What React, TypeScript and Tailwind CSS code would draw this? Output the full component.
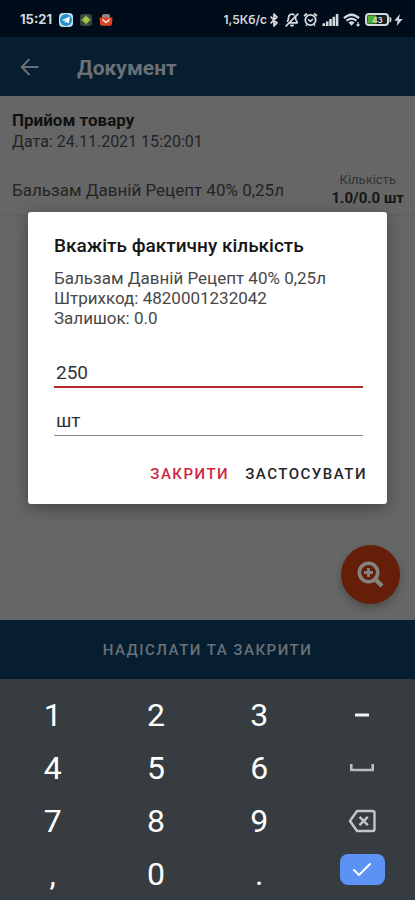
import { useState } from "react";
import { Bluetooth, BellOff, Check } from "lucide-react";

type Key = { label: string; face: React.ReactNode };

function StatusBar() {
  return (
    <div className="flex h-[37px] shrink-0 items-center justify-between bg-[#010c1a] pr-3 pl-5 pt-0.5 font-['Inter',sans-serif] text-[#d5d9dd]">
      <div className="flex items-center gap-[7px]">
        <span className="text-[13px] font-bold">15:21</span>
        <svg width="14" height="14" viewBox="0 0 14 14" aria-hidden="true">
          <rect width="14" height="14" rx="4" fill="#c4dfee" />
          <circle cx="7" cy="7" r="6" fill="#2592cb" />
          <path d="M3 7 11 3.6 9.6 10.6 7 8.8 5.8 10 5.6 8 9 5.4 4.8 7.7Z" fill="#fff" />
        </svg>
        <svg width="12" height="12" viewBox="0 0 13 13" aria-hidden="true">
          <rect width="13" height="13" rx="3" fill="#3d4340" />
          <path d="M6.500 1 8.500 3.500 12 6.500 8.500 9 6.500 12 4.500 9 1 6.500 4.500 3.500Z" fill="#7ba636" />
          <circle cx="6.500" cy="6.300" r="3.200" fill="#9dc94b" />
        </svg>
        <svg width="14" height="14" viewBox="0 0 14 14" aria-hidden="true">
          <path d="M3 5V2.500Q3 1 5 1h4q2 0 2 1.500V5" fill="#8c8782" />
          <path d="M.5 4.500h13l-.6 6.500q-.1 1.800-1.800 1.800H2.900Q1.200 12.800 1.100 11Z" fill="#e04427" />
          <path d="m3.500 6.500 3.500 3 3.500-3" fill="none" stroke="#fff" strokeWidth="1.300" />
        </svg>
      </div>
      <div className="flex items-center">
        <span className="text-[12px] font-semibold">1,5Кб/с</span>
        <Bluetooth className="mr-1" size={14} strokeWidth={3} />
        <BellOff className="mr-1 -scale-x-100" size={14} strokeWidth={3} />
        <svg className="mr-1" width="15" height="15" viewBox="0 0 15 15" fill="none" stroke="currentColor" aria-hidden="true">
          <circle cx="7.500" cy="8" r="5.200" strokeWidth="1.800" />
          <path d="M1 4 4 1.500M14 4 11 1.500" strokeWidth="1.800" />
          <path d="M5 7.200 7.400 9.400 10 7" strokeWidth="1.500" />
          <path d="m4 12.500-1.200 1.300M11 12.500l1.200 1.300" strokeWidth="1.300" />
        </svg>
        <svg className="mr-1" width="17" height="12" viewBox="0 0 17 13" preserveAspectRatio="none" fill="currentColor" aria-hidden="true">
          <path d="M.5 10h2.600v3H.5zM3.900 8h2.600v5H3.900zM7.200 5.500h2.600V13H7.200zM10.500 3h2.600v10h-2.600zM13.800 0h2.600v13h-2.600z" />
        </svg>
        <svg className="mr-1" width="18" height="14" viewBox="0 0 18 14" fill="none" stroke="currentColor" aria-hidden="true">
          <path d="M1 5.200Q8.500-1.800 16 5.200" strokeWidth="2.400" />
          <path d="M3.500 7.800Q8.500 3.300 13.500 7.800" strokeWidth="2.200" />
          <path d="M5.500 9.500Q8.500 7 11.500 9.500L8.500 12.800Z" fill="currentColor" stroke="none" />
          <path d="M15 9v4M13.500 11.500 15 13l1.500-1.500" strokeWidth="1.200" />
        </svg>
        <span className="relative mr-0.5 flex h-[13px] w-[27px] items-center justify-center">
          <svg className="absolute inset-0" width="27" height="13" viewBox="0 0 27 13" aria-hidden="true">
            <rect x="1" y="1" width="22" height="11" rx="3" fill="#14201f" stroke="#d5d9dd" strokeWidth="2" />
            <path d="M24.500 3.500q2 .5 2 3t-2 3z" fill="#d5d9dd" />
            <rect x="2.500" y="2.500" width="9" height="8" rx="1" fill="#4fb32d" />
          </svg>
          <span className="relative pr-0.5 text-[8px] leading-none font-bold">43</span>
        </span>
        <svg width="9" height="12" viewBox="0 0 9 13" fill="currentColor" aria-hidden="true">
          <path d="M6 0 0 7.300h3.500L2.500 13 9 5.400H5Z" />
        </svg>
      </div>
    </div>
  );
}

function QuantityDialog() {
  const [quantity, setQuantity] = useState("250");
  const [unit, setUnit] = useState("шт");
  return (
    <div role="dialog" aria-labelledby="dialog-title" className="w-full rounded-[3px] bg-white pt-5 pr-6 pb-3 pl-[26px] shadow-[0_4px_16px_rgba(0,0,0,0.35)]">
      <h2 id="dialog-title" className="text-[19px] leading-7 font-medium text-[#161616]">
        Вкажіть фактичну кількість
      </h2>
      <p className="mt-2 text-[17px] leading-5 text-[#484848]">
        Бальзам Давній Рецепт 40% 0,25л
        <br />
        Штрихкод: 4820001232042
        <br />
        Залишок: 0.0
      </p>
      <div className="mt-7 flex flex-col gap-4">
        <input
          aria-label="Кількість"
          inputMode="decimal"
          value={quantity}
          onChange={(e) => setQuantity(e.target.value)}
          className="h-8 w-full border-b-2 border-[#b3282b] bg-transparent px-0.5 pt-0.5 text-[19px] text-[#333] outline-none"
        />
        <input
          aria-label="Одиниця"
          value={unit}
          onChange={(e) => setUnit(e.target.value)}
          className="h-8 w-full border-b border-[#888] bg-transparent px-0.5 pt-0.5 text-[19px] text-[#333] outline-none"
        />
      </div>
      <div className="-mr-1 mt-5 flex justify-end gap-4 text-[15px] font-medium tracking-widest">
        <button type="button" className="h-9 text-[#cf1f3f]">ЗАКРИТИ</button>
        <button type="button" className="h-9 text-[#262626]">ЗАСТОСУВАТИ</button>
      </div>
    </div>
  );
}

const digit = (d: string): Key => ({ label: d, face: d });

const keys: Key[] = [
  digit("1"),
  digit("2"),
  digit("3"),
  {
    label: "Мінус",
    face: (
      <svg width="16" height="4" viewBox="0 0 16 4" aria-hidden="true">
        <path d="M1 2h14" stroke="#f2f3f3" strokeWidth="3" />
      </svg>
    ),
  },
  digit("4"),
  digit("5"),
  digit("6"),
  {
    label: "Пробіл",
    face: (
      <svg width="24" height="8" viewBox="0 0 24 8" fill="none" aria-hidden="true">
        <path d="M1.300 0v6h21.400V0" stroke="#b9bcbd" strokeWidth="2.600" />
      </svg>
    ),
  },
  digit("7"),
  digit("8"),
  digit("9"),
  {
    label: "Стерти",
    face: (
      <svg width="28" height="24" viewBox="0 0 28 24" fill="none" stroke="#c3c6c7" aria-hidden="true">
        <path d="M9 2h15.500q2 0 2 2v16q0 2-2 2H9L2 12Z" strokeWidth="2.400" strokeLinejoin="round" />
        <path d="m11.500 7.800 8.400 8.400m0-8.400-8.400 8.400" strokeWidth="2.400" />
      </svg>
    ),
  },
  digit(","),
  digit("0"),
  digit("."),
  {
    label: "Готово",
    face: (
      <span className="mb-2 flex h-[31px] w-[45px] items-center justify-center rounded-lg bg-[#5b92f3] text-white">
        <Check size={24} strokeWidth={2} />
      </span>
    ),
  },
];

function Keyboard() {
  return (
    <div className="grid shrink-0 grid-cols-4 bg-[#363c3f] pt-[9px] pr-0.5 text-[32px] leading-none text-white">
      {keys.map((key) => (
        <button key={key.label} type="button" aria-label={key.label} className="flex h-[53px] items-center justify-center pl-0.5">
          {key.face}
        </button>
      ))}
    </div>
  );
}

export default function App() {
  return (
    <div className="flex min-h-screen flex-col bg-[#666] font-['Roboto',sans-serif]">
      <StatusBar />
      <div className="relative flex flex-1 flex-col">
        <header className="flex h-[59px] shrink-0 items-center bg-[#061e30] pl-5 text-[#6a7075]">
          <button type="button" aria-label="Назад" className="mr-[38px]">
            <svg width="19" height="18" viewBox="0 0 19 18" fill="none" stroke="currentColor" strokeWidth="2" aria-hidden="true">
              <path d="M9.500 1 1.800 9l7.700 8M2 9h16.500" />
            </svg>
          </button>
          <h1 className="pt-1 text-[21px] font-bold">Документ</h1>
        </header>
        <main className="relative flex-1 text-[#242424]">
          <section className="border-b border-[#626262] px-3 pt-3.5 pb-2">
            <h2 className="text-[17px] leading-5 font-bold text-[#111]">Прийом товару</h2>
            <p className="text-base leading-6">Дата: 24.11.2021 15:20:01</p>
          </section>
          <section className="flex items-center justify-between border-b border-[#606060] py-2 pr-[11px] pl-3">
            <p className="pt-0.5 text-[17px] leading-6">Бальзам Давній Рецепт 40% 0,25л</p>
            <div className="text-center">
              <p className="text-[13px] leading-[18px] text-[#333]">Кількість</p>
              <p className="text-[15px] leading-[18px] font-bold text-[#161616]">1.0/0.0 шт</p>
            </div>
          </section>
          <button type="button" aria-label="Знайти товар" className="absolute right-[15px] bottom-4 flex size-[59px] items-center justify-center rounded-full bg-[#651e08] shadow-[0_4px_8px_rgba(0,0,0,0.25)]">
            <svg width="27" height="27" viewBox="0 0 27 27" fill="none" stroke="#858382" aria-hidden="true">
              <circle cx="11.500" cy="11.500" r="9.200" strokeWidth="3.600" />
              <path d="m18 18 7 7" strokeWidth="4.400" />
              <path d="M11.500 7v9M7 11.500h9" strokeWidth="2.800" />
            </svg>
          </button>
        </main>
        <footer className="shrink-0">
          <button type="button" className="h-[59px] w-full bg-[#061e30] pt-0.5 text-[15px] font-medium tracking-widest text-[#6a7178]">
            НАДІСЛАТИ ТА ЗАКРИТИ
          </button>
        </footer>
        <div className="absolute inset-0 flex items-center justify-center px-7">
          <QuantityDialog />
        </div>
      </div>
      <Keyboard />
    </div>
  );
}
